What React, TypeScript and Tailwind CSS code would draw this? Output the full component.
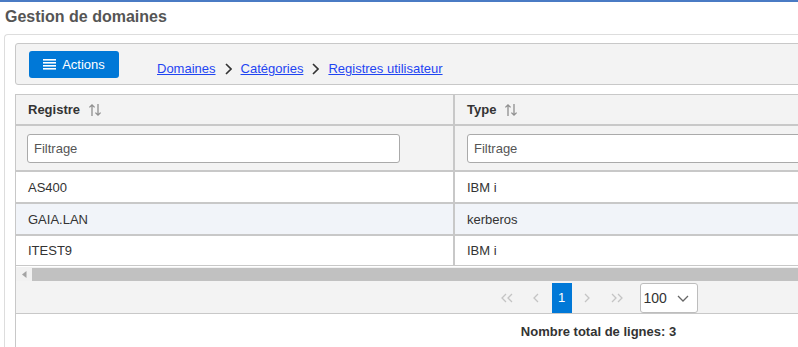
import type { ReactNode } from "react";

type Row = { registre: string; type: string };

const ROWS: Row[] = [
  { registre: "AS400", type: "IBM i" },
  { registre: "GAIA.LAN", type: "kerberos" },
  { registre: "ITEST9", type: "IBM i" },
];

function SortIcon() {
  return (
    <svg width="14" height="14" viewBox="0 0 14 14" fill="none" stroke="#8f8f8f" strokeWidth="1.3">
      <path d="M4 13V1.8M1.4 4.4L4 1.8l2.6 2.6" />
      <path d="M10 1v11.2M7.4 9.6L10 12.2l2.6-2.6" />
    </svg>
  );
}

function Chevron({ color = "#333", width = 1.6 }: { color?: string; width?: number }) {
  return (
    <svg width="7" height="12" viewBox="0 0 7 12" fill="none" stroke={color} strokeWidth={width}>
      <path d="M1 1l5 5-5 5" />
    </svg>
  );
}

function PageBtn({ children, active }: { children: ReactNode; active?: boolean }) {
  return (
    <div
      className={`h-[30px] flex items-center justify-center ${
        active ? "w-[20px] bg-[#0078d7] text-white" : "w-[30px]"
      }`}
    >
      {children}
    </div>
  );
}

function Pager() {
  const grey = "#c4c4c4";
  return (
    <div className="flex items-center mr-[8px]">
      <PageBtn>
        <svg width="12" height="10" viewBox="0 0 12 10" fill="none" stroke={grey} strokeWidth="1.3">
          <path d="M5 1L1 5l4 4M11 1L7 5l4 4" />
        </svg>
      </PageBtn>
      <PageBtn>
        <svg width="7" height="10" viewBox="0 0 7 10" fill="none" stroke={grey} strokeWidth="1.3">
          <path d="M5 1L1 5l4 4" />
        </svg>
      </PageBtn>
      <PageBtn active>1</PageBtn>
      <PageBtn>
        <svg width="7" height="10" viewBox="0 0 7 10" fill="none" stroke={grey} strokeWidth="1.3">
          <path d="M2 1l4 4-4 4" />
        </svg>
      </PageBtn>
      <PageBtn>
        <svg width="12" height="10" viewBox="0 0 12 10" fill="none" stroke={grey} strokeWidth="1.3">
          <path d="M1 1l4 4-4 4M7 1l4 4-4 4" />
        </svg>
      </PageBtn>
      <div className="ml-[8px] h-[30px] w-[58px] bg-white border border-[#bdbdbd] rounded-[3px] flex items-center pl-[3px] gap-[10px] text-[14px] text-[#333]">
        <span>100</span>
        <svg width="12" height="7" viewBox="0 0 12 7" fill="none" stroke="#666" strokeWidth="1.3">
          <path d="M1 1l5 5 5-5" />
        </svg>
      </div>
    </div>
  );
}

export default function App() {
  return (
    <div className="w-[798px] h-[347px] overflow-hidden bg-white border-t-2 border-[#4a7bc4] font-['Liberation_Sans',Arial,sans-serif] text-[13px] text-[#333]">
      <h1 className="px-[5px] pt-[5px] mb-[7px] text-[16px] leading-[20px] font-bold text-[#555]">
        Gestion de domaines
      </h1>

      <div className="ml-[4px] w-[1200px] border-l border-t border-[#dddddd] rounded-tl-[4px] pl-[10px] pt-[8px]">
        <div className="w-[1166px] h-[42px] flex items-start pl-[13px] pt-[7px] bg-[#f3f3f3] border border-[#c8c8c8] rounded-[3px]">
          <button
            type="button"
            className="h-[27px] w-[90px] flex items-center justify-center gap-[6px] rounded-[3px] bg-[#0078d7] text-white text-[13px]"
          >
            <svg width="13" height="11" viewBox="0 0 13 11" fill="#fff">
              <rect x="0" y="0" width="13" height="1.6" />
              <rect x="0" y="3" width="13" height="1.6" />
              <rect x="0" y="6" width="13" height="1.6" />
              <rect x="0" y="9" width="13" height="1.6" />
            </svg>
            Actions
          </button>
          <div className="ml-[38px] mt-[10px] flex items-center gap-[9px] leading-[16px] text-[#1f45f2]">
            <a href="#" className="underline">Domaines</a>
            <Chevron />
            <a href="#" className="underline">Catégories</a>
            <Chevron />
            <a href="#" className="underline">Registres utilisateur</a>
          </div>
        </div>

        <div className="mt-[9px] w-[1166px] border-l border-t border-[#c8c8c8]">
          {/* header */}
          <div className="flex h-[31px] bg-[#f3f3f3] border-b-2 border-[#c8c8c8] font-bold">
            <div className="w-[439px] border-r-2 border-[#c8c8c8] flex items-center gap-[8px] pl-[12px]">
              Registre
              <SortIcon />
            </div>
            <div className="flex-1 flex items-center gap-[8px] pl-[12px]">
              Type
              <SortIcon />
            </div>
          </div>

          {/* filters */}
          <div className="flex h-[46px] bg-[#f3f3f3] border-b-2 border-[#c8c8c8]">
            <div className="w-[439px] border-r-2 border-[#c8c8c8] pl-[11px] pt-[8px]">
              <input
                placeholder="Filtrage"
                className="w-[373px] h-[29px] bg-white border border-[#aaaaaa] rounded-[3px] px-[6px] text-[13px] placeholder:text-[#555] outline-none"
              />
            </div>
            <div className="flex-1 pl-[12px] pt-[8px]">
              <input
                placeholder="Filtrage"
                className="w-[373px] h-[29px] bg-white border border-[#aaaaaa] rounded-[3px] px-[6px] text-[13px] placeholder:text-[#555] outline-none"
              />
            </div>
          </div>

          {/* rows */}
          {ROWS.map((r, i) => (
            <div
              key={r.registre}
              className={`flex ${i < ROWS.length - 1 ? "h-[32px] border-b-2" : "h-[30px] border-b"} border-[#c8c8c8] ${
                i % 2 === 1 ? "bg-[#f1f4f9]" : "bg-white"
              }`}
            >
              <div className="w-[439px] border-r-2 border-[#c8c8c8] flex items-center pl-[12px] pt-[1px]">{r.registre}</div>
              <div className="flex-1 flex items-center pl-[12px] pt-[1px]">{r.type}</div>
            </div>
          ))}

          {/* horizontal scrollbar */}
          <div className="mt-[1px] flex h-[14px] bg-[#f1f1f1]">
            <div className="w-[16px] flex items-center justify-center">
              <svg width="5" height="7" viewBox="0 0 5 7" fill="#a3a3a3">
                <path d="M4.5 0v7L0 3.5z" />
              </svg>
            </div>
            <div className="flex-1 mt-[1px] bg-[#c1c1c1]" />
          </div>

          {/* pager */}
          <div className="h-[33px] pt-[2px] bg-[#f3f3f3] border-b border-[#c8c8c8] flex justify-center">
            <Pager />
          </div>

          <div className="pt-[10px] h-[40px] text-center font-bold leading-[16px]">Nombre total de lignes: 3</div>
        </div>
      </div>
    </div>
  );
}
